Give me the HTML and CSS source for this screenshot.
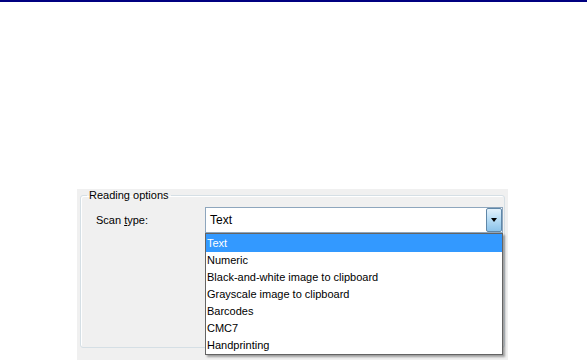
FILE: index.html
```html
<!DOCTYPE html>
<html lang="en">
<head>
  <meta charset="UTF-8" />
  <title>Reading options</title>
  <link rel="stylesheet" href="styles.css">
</head>
<body>

  <div class="top-line"></div>

  <!-- Options panel -->
  <div class="panel">
    <fieldset class="group">
      <legend>Reading options</legend>
      <div class="row">
        <label class="label" for="scanType">Scan <u>t</u>ype:</label>
        <div class="combo" id="scanType">
          <span class="combo-text">Text</span>
          <span class="combo-btn"><span class="arrow"></span></span>

          <ul class="dropdown">
            <li class="selected">Text</li>
            <li>Numeric</li>
            <li>Black-and-white image to clipboard</li>
            <li>Grayscale image to clipboard</li>
            <li>Barcodes</li>
            <li>CMC7</li>
            <li>Handprinting</li>
          </ul>
        </div>
      </div>
    </fieldset>
  </div>

</body>
</html>
```

FILE: styles.css
```css
body {
  margin: 0;
  padding: 0;
  background: #ffffff;
  font-family: "Liberation Sans", Arial, sans-serif;
  font-size: 11px;
  color: #000000;
}

.top-line {
  height: 2px;
  background-color: #000080;
}

.panel {
  margin: 187px 0 0 77px;
  width: 431px;
  height: 171px;
  background-color: #f0f0f0;
  padding: 0 3px;
  box-sizing: border-box;
}

.group {
  margin: 0;
  padding: 5px 0 0 0;
  height: 159px;
  box-sizing: border-box;
  border: 1px solid #d5dfe5;
  border-radius: 3px;
  box-shadow: inset 1px 1px 0 #ffffff;
}

.group legend {
  padding: 0 2px;
  margin-left: 6px;
  line-height: 13px;
}

.row {
  display: flex;
  align-items: center;
  padding-left: 15px;
}

.label {
  width: 109px;
}

.combo {
  position: relative;
  display: flex;
  align-items: center;
  width: 298px;
  height: 26px;
  box-sizing: border-box;
  border: 1px solid #8ea6bd;
  background: #ffffff;
}

.combo-text {
  flex: 1;
  padding-left: 4px;
  font-size: 12px;
}

.combo-btn {
  display: flex;
  justify-content: center;
  align-items: center;
  width: 16px;
  height: 24px;
  box-sizing: border-box;
  border: 1px solid #5f87a8;
  border-radius: 2px;
  background: linear-gradient(#e3f1fb, #b5dbf4 50%, #8cc3ea);
}

.arrow {
  width: 0;
  height: 0;
  border-left: 3px solid transparent;
  border-right: 3px solid transparent;
  border-top: 4px solid #000000;
}

/* open list under the combo */
.dropdown {
  position: absolute;
  top: 25px;
  left: -1px;
  width: 298px;
  margin: 0;
  padding: 0;
  list-style: none;
  box-sizing: border-box;
  border: 1px solid #646464;
  background: #ffffff;
  box-shadow: 2px 2px 2px rgba(0, 0, 0, 0.35);
}

.dropdown li {
  height: 17px;
  line-height: 17px;
  padding-left: 1px;
}

.dropdown li.selected {
  height: 18px;
  line-height: 18px;
  background-color: #3399ff;
  color: #ffffff;
}
```
